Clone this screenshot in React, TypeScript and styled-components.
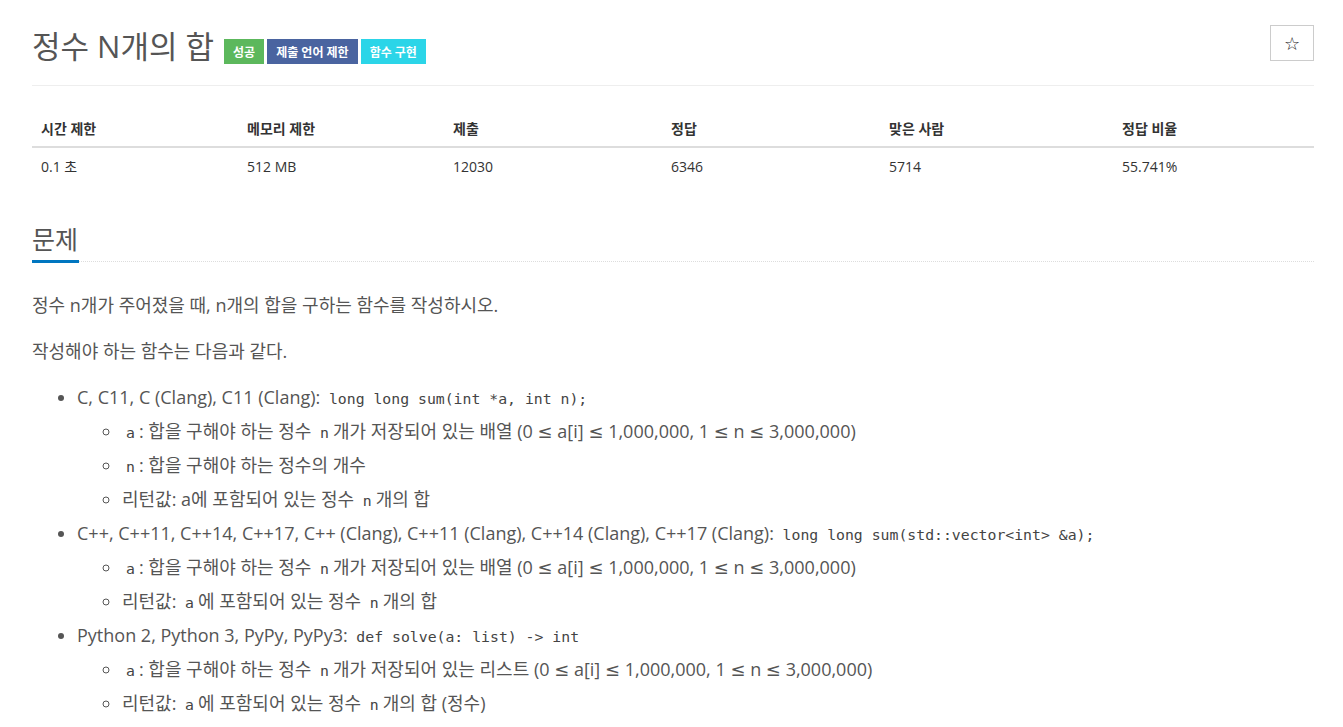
import styled, { createGlobalStyle } from 'styled-components';

const GlobalStyle = createGlobalStyle`
  body {
    margin: 0;
    background: #fff;
    color: #333;
    font-family: "Open Sans", "Noto Sans CJK KR", sans-serif;
  }
`;

const Page = styled.div`
  padding: 25px 29px 0 32px;
`;

const Header = styled.div`
  display: flex;
  justify-content: space-between;
  align-items: flex-start;
  padding-bottom: 19px;
  border-bottom: 1px solid #eee;
`;

const TitleRow = styled.div`
  display: flex;
  align-items: flex-end;
  gap: 3px;
`;

const Title = styled.h1`
  margin: 1px 7px 0 0;
  font-size: 31px;
  line-height: 40px;
  font-weight: 400;
  color: #555;
`;

const Label = styled.span<{ $bg: string }>`
  display: inline-flex;
  align-items: center;
  height: 25px;
  padding: 0 9px;
  margin-bottom: 2px;
  background: ${(p) => p.$bg};
  color: #fff;
  font-size: 12px;
  font-weight: 700;
`;

const StarButton = styled.button`
  width: 44px;
  height: 36px;
  border: 1px solid #ccc;
  background: #fff;
  color: #222;
  font-family: "DejaVu Sans", sans-serif;
  font-size: 18px;
  padding: 0;
  cursor: pointer;
`;

const InfoTable = styled.table`
  width: 100%;
  margin-top: 24px;
  border-collapse: collapse;
  font-size: 14px;
  line-height: 20px;

  th {
    text-align: left;
    font-weight: 700;
    padding: 9px 8px 7px 9px;
    border-bottom: 2px solid #ddd;
  }

  td {
    padding: 9px 8px 7px 9px;
  }
`;

const SectionHead = styled.h2`
  display: flex;
  margin: 38px 0 0;
  border-bottom: 1px dotted #ddd;
  font-size: 25px;
  font-weight: 400;
  line-height: 34px;
  color: #555;
`;

const SectionTitle = styled.span`
  padding: 0 1px 4px 0;
  margin-bottom: -2px;
  border-bottom: 3px solid #0076c0;
`;

const Description = styled.div`
  margin-top: 26px;
  font-size: 18px;
  line-height: 34px;
  color: #555;

  p {
    margin: 0 0 12px;
  }

  ul {
    margin: 0;
    padding-left: 45px;
  }

  ul ul {
    list-style: circle;
  }
`;

const Code = styled.code`
  font-family: "DejaVu Sans Mono", monospace;
  font-size: 14.8px;
  line-height: 20px;
  padding: 2px 4px;
  color: #444;
`;

const Le = styled.span`
  font-family: "DejaVu Sans", sans-serif;
  line-height: 20px;
`;

const columns = [206, 206, 218, 218, 233];

const stats = [
  ['시간 제한', '0.1 초'],
  ['메모리 제한', '512 MB'],
  ['제출', '12030'],
  ['정답', '6346'],
  ['맞은 사람', '5714'],
  ['정답 비율', '55.741%'],
];

const Range = () => (
  <>
    (0 <Le>≤</Le> a[i] <Le>≤</Le> 1,000,000, 1 <Le>≤</Le> n <Le>≤</Le> 3,000,000)
  </>
);

export default function App() {
  return (
    <Page>
      <GlobalStyle />
      <Header>
        <TitleRow>
          <Title>정수 N개의 합</Title>
          <Label $bg="#5cb85c">성공</Label>
          <Label $bg="#4a64a0">제출 언어 제한</Label>
          <Label $bg="#2bd5e8">함수 구현</Label>
        </TitleRow>
        <StarButton>☆</StarButton>
      </Header>

      <InfoTable>
        <colgroup>
          {columns.map((w, i) => (
            <col key={i} style={{ width: w }} />
          ))}
          <col />
        </colgroup>
        <thead>
          <tr>
            {stats.map(([h]) => (
              <th key={h}>{h}</th>
            ))}
          </tr>
        </thead>
        <tbody>
          <tr>
            {stats.map(([h, v]) => (
              <td key={h}>{v}</td>
            ))}
          </tr>
        </tbody>
      </InfoTable>

      <SectionHead>
        <SectionTitle>문제</SectionTitle>
      </SectionHead>

      <Description>
        <p>정수 n개가 주어졌을 때, n개의 합을 구하는 함수를 작성하시오.</p>
        <p>작성해야 하는 함수는 다음과 같다.</p>
        <ul>
          <li>
            C, C11, C (Clang), C11 (Clang): <Code>long long sum(int *a, int n);</Code>
            <ul>
              <li>
                <Code>a</Code>: 합을 구해야 하는 정수 <Code>n</Code>개가 저장되어 있는 배열 <Range />
              </li>
              <li>
                <Code>n</Code>: 합을 구해야 하는 정수의 개수
              </li>
              <li>
                리턴값: a에 포함되어 있는 정수 <Code>n</Code>개의 합
              </li>
            </ul>
          </li>
          <li>
            C++, C++11, C++14, C++17, C++ (Clang), C++11 (Clang), C++14 (Clang), C++17 (Clang):{' '}
            <Code>long long sum(std::vector&lt;int&gt; &amp;a);</Code>
            <ul>
              <li>
                <Code>a</Code>: 합을 구해야 하는 정수 <Code>n</Code>개가 저장되어 있는 배열 <Range />
              </li>
              <li>
                리턴값: <Code>a</Code>에 포함되어 있는 정수 <Code>n</Code>개의 합
              </li>
            </ul>
          </li>
          <li>
            Python 2, Python 3, PyPy, PyPy3: <Code>def solve(a: list) -&gt; int</Code>
            <ul>
              <li>
                <Code>a</Code>: 합을 구해야 하는 정수 <Code>n</Code>개가 저장되어 있는 리스트 <Range />
              </li>
              <li>
                리턴값: <Code>a</Code>에 포함되어 있는 정수 <Code>n</Code>개의 합 (정수)
              </li>
            </ul>
          </li>
        </ul>
      </Description>
    </Page>
  );
}
